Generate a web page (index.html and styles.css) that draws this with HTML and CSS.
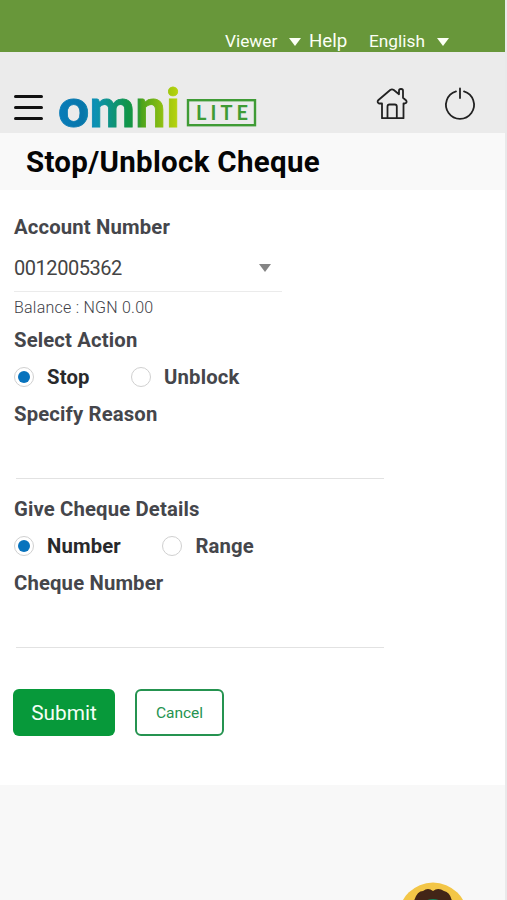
FILE: index.html
```html
<!DOCTYPE html>
<html lang="en">
<head>
<meta charset="utf-8">
<title>Stop/Unblock Cheque</title>
<link rel="stylesheet" href="styles.css">
</head>
<body>
<div class="page">
  <nav class="topbar">
    <span class="viewer">Viewer</span><i class="caret"></i>
    <span class="help">Help</span>
    <span class="language">English</span><i class="caret"></i>
  </nav>
  <header class="header">
    <div class="menu"><i></i><i></i><i></i></div>
    <svg class="logo" width="202" height="48" viewBox="0 0 202 48">
      <defs>
        <linearGradient id="brand" gradientUnits="userSpaceOnUse" x1="0" y1="0" x2="120" y2="0">
          <stop offset="0" stop-color="#087cb9"/>
          <stop offset=".2" stop-color="#0776aa"/>
          <stop offset=".3" stop-color="#0c91b5"/>
          <stop offset=".57" stop-color="#10954a"/>
          <stop offset=".65" stop-color="#1a943c"/>
          <stop offset=".69" stop-color="#4da31c"/>
          <stop offset=".89" stop-color="#99c410"/>
          <stop offset="1" stop-color="#bbd50c"/>
        </linearGradient>
      </defs>
      <text class="brand" x="-1" y="42.5" textLength="122" lengthAdjust="spacingAndGlyphs">omni</text>
      <rect x="129" y="16.2" width="67" height="25" fill="none" stroke="#3f9b35" stroke-width="2.4"/>
      <text class="lite" x="137" y="36" textLength="52">LITE</text>
    </svg>
    <svg class="home" width="34" height="34" viewBox="0 0 34 34">
      <path d="M7 31.2V16.5H4Q1.5 15 3.5 13L15.2 3Q17 1.8 18.8 3L24 7.2V3.7Q24 2 25.7 2H26.3Q28 2 28 3.7V10.8L31.2 13.5Q32.5 15.8 29.8 16.5H28.5V31.2ZM12.5 31V19.5Q12.5 17.5 14.5 17.5H19.8Q21.8 17.5 21.8 19.5V31"/>
    </svg>
    <svg class="power" width="34" height="36" viewBox="0 0 34 36">
      <path d="M13 5.4A14 14 0 1 0 21 5.4M17 2.5V12"/>
    </svg>
  </header>
  <h1 class="title"><span>Stop/Unblock Cheque</span></h1>
  <main class="form">
    <div class="label">Account Number</div>
    <div class="select"><span>0012005362</span><i class="caret"></i></div>
    <div class="balance">Balance : NGN 0.00</div>
    <div class="label">Select Action</div>
    <div class="radios action">
      <label class="option checked"><i class="dot"></i>Stop</label>
      <label class="option"><i class="dot"></i>Unblock</label>
    </div>
    <div class="label">Specify Reason</div>
    <div class="input"></div>
    <div class="label">Give Cheque Details</div>
    <div class="radios details">
      <label class="option checked"><i class="dot"></i>Number</label>
      <label class="option"><i class="dot"></i>Range</label>
    </div>
    <div class="label">Cheque Number</div>
    <div class="input"></div>
    <div class="actions">
      <button class="submit">Submit</button>
      <button class="cancel">Cancel</button>
    </div>
  </main>
  <svg class="assistant" width="70" height="70" viewBox="0 0 70 70">
    <circle cx="35" cy="35" r="34.5" fill="#f3c647"/>
    <path d="M16 19Q19 9 25 9Q30 5 35 9Q40 5 46 9Q52 10 54 19V36H16Z" fill="#422517"/>
    <path d="M25 20Q35 14 45 20Z" fill="#16855c"/>
  </svg>
</div>
</body>
</html>
```
FILE: styles.css
```css
* { box-sizing: border-box; }
body { margin: 0; background: #e9e9ea; font-family: Roboto, "Liberation Sans", sans-serif; }
.page { position: relative; width: 505px; height: 900px; overflow: hidden; background: #f8f8f8; }
.topbar { display: flex; align-items: center; height: 52px; padding: 30px 0 0 225px; background: #68973a; color: #fbfff5; font-size: 17.3px; line-height: 22px; }
.topbar .caret { border-top-color: #fbfff5; margin-top: 2px; }
.viewer { width: 64px; }
.help { margin-left: 8px; width: 60px; font-size: 18.7px; }
.language { width: 68px; }
.caret { border: 6px solid transparent; border-top: 8px solid #858585; border-bottom: 0; }
.header { display: flex; align-items: flex-start; height: 81px; background: #ebebeb; }
.menu { display: flex; flex-direction: column; gap: 7.5px; width: 44px; padding: 43px 0 0 14px; }
.menu i { width: 29px; height: 3.3px; border-radius: 2px; background: #111; }
.logo { margin: 32px 0 0 15px; flex: none; overflow: visible; }
.brand { font: 900 54px Lato, sans-serif; fill: url(#brand); stroke: url(#brand); stroke-width: .8; }
.lite { font: 700 20px Lato, sans-serif; fill: #3f9b35; }
.home { margin: 34.5px 0 0 114px; }
.power { margin: 34px 0 0 34px; }
.home path, .power path { fill: none; stroke: #222; stroke-width: 1.8; stroke-linejoin: round; stroke-linecap: round; }
.title { margin: 0; height: 57px; padding-left: 26px; background: #f9f9f9; font-size: 29.5px; font-weight: 700; line-height: 58px; letter-spacing: .3px; color: #050505; }
.form { height: 595px; padding: 22px 14px 0; background: #fff; }
.label { height: 30px; font-size: 20.3px; font-weight: 700; line-height: 31px; letter-spacing: .15px; color: #45464b; }
.select { display: flex; align-items: center; width: 268px; height: 50px; border-bottom: 1px solid #ebebeb; padding: 2px 11px 0 0; justify-content: space-between; font-size: 20px; letter-spacing: -.45px; color: #444; }
.balance { height: 33px; font-size: 16px; font-weight: 300; line-height: 31px; letter-spacing: .24px; color: #414147; }
.radios { display: flex; height: 44px; }
.action { gap: 41.5px; }
.details { gap: 41.5px; }
.option { display: flex; align-items: center; gap: 13px; font-size: 20.3px; font-weight: 700; letter-spacing: .15px; color: #45464b; }
.checked { color: #29292b; }
.dot { width: 20px; height: 20px; border: 1.5px solid #d0d0d0; border-radius: 50%; display: grid; place-items: center; }
.checked .dot::after { content: ""; width: 12px; height: 12px; border-radius: 50%; background: #0873bd; }
.input { width: 368px; height: 50px; margin: 0 0 15px 2px; border-bottom: 1px solid #e2e2e2; }
.actions { display: flex; gap: 20px; margin: 41px 0 0 -1px; }
button { height: 47px; padding: 0; border-radius: 6px; font-family: inherit; }
.submit { width: 102px; border: 0; background: #07993a; color: #f4fff6; font-size: 20.8px; }
.cancel { width: 89px; border: 2px solid #259350; background: #fff; color: #259350; font-size: 15.5px; }
.assistant { position: absolute; left: 398px; top: 882px; }
```
